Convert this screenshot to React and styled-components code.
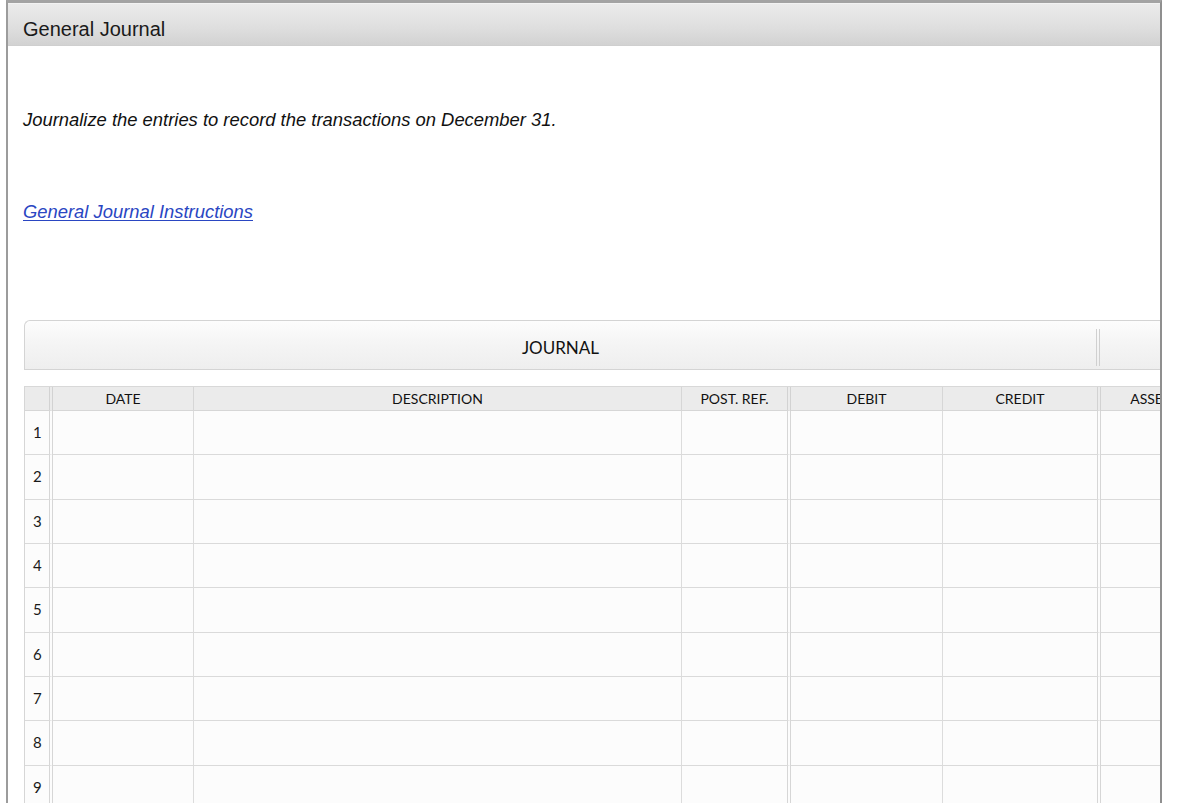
import styled, { createGlobalStyle } from 'styled-components';

const GlobalStyle = createGlobalStyle`
  html, body {
    margin: 0;
    padding: 0;
    background: #ffffff;
  }
`

const Frame = styled.div`
  box-sizing: border-box;
  margin-left: 6px;
  width: 1156px;
  height: 803px;
  border-top: 3px solid #a3a3a3;
  border-left: 2px solid #9c9c9c;
  border-right: 2px solid #8f8f8f;
  overflow: hidden;
  background: #ffffff;
`

const TitleBar = styled.div`
  box-sizing: border-box;
  height: 43px;
  padding: 14px 0 0 15px;
  background: linear-gradient(to bottom, #ebebeb 0%, #dedede 60%, #d2d2d2 100%);
  border-top: 1px solid #f2f2f2;
  border-bottom: 1px solid #cfcfcf;
  font-family: "Liberation Sans", Arial, sans-serif;
  font-size: 20px;
  line-height: 22px;
  color: #1a1a1a;
`

const Content = styled.div`
  padding-left: 15px;
`

const Prompt = styled.p`
  margin: 63px 0 0 0;
  font-family: "Liberation Sans", Arial, sans-serif;
  font-style: italic;
  font-size: 18.4px;
  line-height: 21px;
  color: #111;
`

const HelpLink = styled.a`
  display: inline-block;
  margin-top: 71px;
  font-family: "Liberation Sans", Arial, sans-serif;
  font-style: italic;
  font-size: 18.4px;
  line-height: 21px;
  color: #2a46c2;
  text-decoration: underline;
  text-underline-offset: 2px;
  cursor: pointer;
`

const Journal = styled.div`
  margin-top: 98px;
  margin-left: 1px;
  width: 1200px;
  font-family: Lato, "Open Sans", sans-serif;
  color: #1a1a1a;
`

const JournalBand = styled.div`
  box-sizing: border-box;
  height: 50px;
  display: flex;
  align-items: center;
  border: 1px solid #d4d4d4;
  border-right: none;
  border-radius: 6px 0 0 0;
  background: linear-gradient(to bottom, #fdfdfd 0%, #f5f5f5 45%, #eeeeee 100%);
`

const BandTitle = styled.div`
  width: 1071px;
  padding-top: 5px;
  text-align: center;
  font-size: 17px;
  color: #111;
`

const BandDivider = styled.div`
  box-sizing: border-box;
  width: 4px;
  height: 37px;
  margin-top: 4px;
  border-left: 1px solid #d0d0d0;
  border-right: 1px solid #d0d0d0;
`

const Grid = styled.div`
  margin-top: 16px;
  display: grid;
  grid-template-columns: 28px 141px 488px 109px 152px 158px 108px;
  grid-template-rows: 24px;
  grid-auto-rows: 44.33px;
  border-left: 1px solid #d6d6d6;
  border-top: 1px solid #d8d8d8;
`

const HeadCell = styled.div`
  box-sizing: border-box;
  display: flex;
  align-items: center;
  justify-content: center;
  background: #ebebeb;
  border-bottom: 1px solid #d6d6d6;
  border-right: ${props => props.$double ? '4px double #d2d2d2' : '1px solid #d6d6d6'};
  font-size: 14px;
  color: #111;
  white-space: nowrap;
`

const Cell = styled.div`
  box-sizing: border-box;
  display: flex;
  align-items: center;
  padding-left: ${props => props.$num ? '8px' : '0'};
  padding-bottom: 1px;
  background: #fcfcfc;
  border-bottom: 1px solid #dadada;
  border-right: ${props => props.$double ? '4px double #d6d6d6' : '1px solid #dcdcdc'};
  font-size: 15px;
  color: #1a1a1a;
`

const columns = [
  { label: '', double: true },
  { label: 'DATE' },
  { label: 'DESCRIPTION' },
  { label: 'POST. REF.', double: true },
  { label: 'DEBIT' },
  { label: 'CREDIT', double: true },
  { label: 'ASSETS' },
]

const rows = [1, 2, 3, 4, 5, 6, 7, 8, 9]

function App() {
  return (
    <>
      <GlobalStyle />
      <Frame>
        <TitleBar>General Journal</TitleBar>
        <Content>
          <Prompt>Journalize the entries to record the transactions on December 31.</Prompt>
          <HelpLink>General Journal Instructions</HelpLink>
          <Journal>
            <JournalBand>
              <BandTitle>JOURNAL</BandTitle>
              <BandDivider />
            </JournalBand>
            <Grid>
              {columns.map((col, i) => (
                <HeadCell key={'h' + i} $double={col.double}>{col.label}</HeadCell>
              ))}
              {rows.map(n => columns.map((col, i) => (
                <Cell key={n + '-' + i} $double={col.double} $num={i === 0}>
                  {i === 0 ? n : null}
                </Cell>
              )))}
            </Grid>
          </Journal>
        </Content>
      </Frame>
    </>
  )
}

export default App
